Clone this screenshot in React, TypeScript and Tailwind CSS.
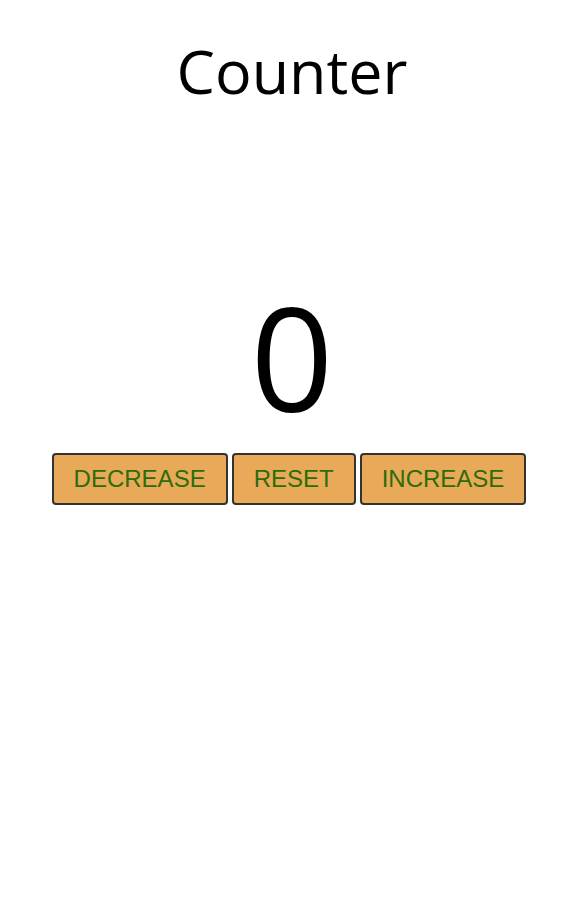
export default function App() {
  return (
    <div className="w-[584px] h-[920px] bg-white flex flex-col items-center">
      <h1
        className="mt-[29px] text-[61px] leading-[84px] text-black"
        style={{ fontFamily: '"Open Sans", "Noto Sans", sans-serif' }}
      >
        Counter
      </h1>
      <div
        className="mt-[153px] text-[145px] leading-[180px] text-black"
        style={{ fontFamily: '"Open Sans", "Noto Sans", sans-serif' }}
      >
        0
      </div>
      <div className="flex gap-[4px] mt-[7px] pr-[6px]" style={{ fontFamily: '"Liberation Sans", Arial, sans-serif' }}>
        <button className="h-[52px] px-[20px] bg-[#e8aa58] text-[#2e6b0b] text-[24px] border-2 border-[#333] rounded-[4px]">DECREASE</button>
        <button className="h-[52px] px-[20px] bg-[#e8aa58] text-[#2e6b0b] text-[24px] border-2 border-[#333] rounded-[4px]">RESET</button>
        <button className="h-[52px] px-[20px] bg-[#e8aa58] text-[#2e6b0b] text-[24px] border-2 border-[#333] rounded-[4px]">INCREASE</button>
      </div>
    </div>
  );
}
